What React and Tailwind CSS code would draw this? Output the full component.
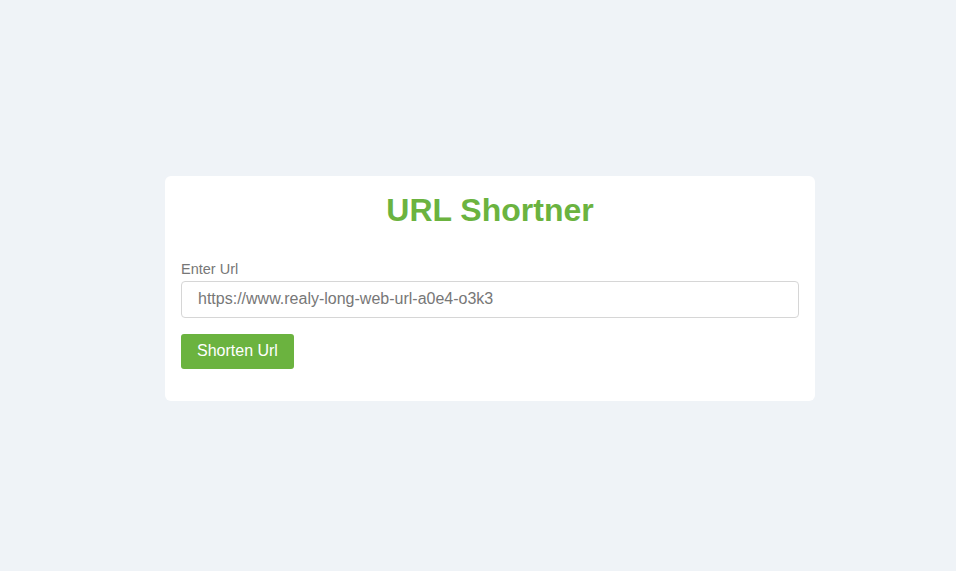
export default function App() {
  return (
    <div className="min-h-screen w-full bg-[#eff3f7] flex items-center justify-center font-['Liberation_Sans',Arial,sans-serif]">
      <div className="w-[650px] bg-white rounded-md pt-[15px] px-4 pb-8 mt-[5px] ml-[24px]">
        <h1 className="text-center text-[32px] leading-[38px] font-bold text-[#6bb33f]">URL Shortner</h1>
        <label className="block mt-[30px] mb-[2px] text-[14.5px] leading-[20px] text-[#777777]">Enter Url</label>
        <input
          type="text"
          placeholder="https://www.realy-long-web-url-a0e4-o3k3"
          className="block w-full h-[37px] px-4 border border-[#d6d6d6] rounded-[4px] text-[16px] text-[#555] placeholder:text-[#777777] outline-none"
        />
        <button className="mt-4 h-[35px] px-4 rounded-[3px] bg-[#6bb33f] text-white text-[16px] leading-[20px]">
          Shorten Url
        </button>
      </div>
    </div>
  );
}
